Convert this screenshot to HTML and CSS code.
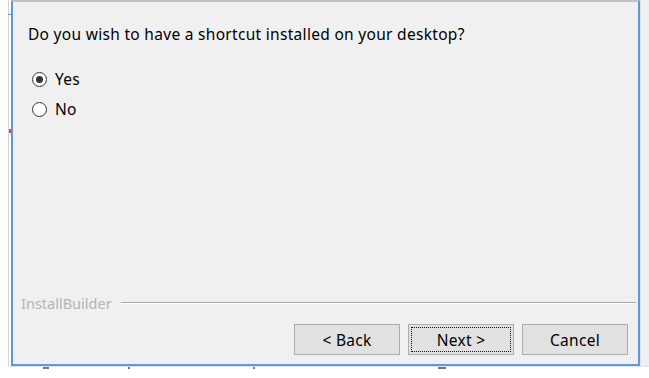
FILE: index.html
```html
<!DOCTYPE html>
<html>
<head>
<meta charset="utf-8">
<link rel="stylesheet" href="styles.css">
</head>
<body>
<div class="screen">
  <div class="backdrop-left"><span class="notch-blue"></span><span class="notch-red"></span></div>
  <div class="window">
    <div class="content">
      <p class="question">Do you wish to have a shortcut installed on your desktop?</p>
      <div class="options">
        <label class="radio"><span class="dot checked"></span><span>Yes</span></label>
        <label class="radio"><span class="dot"></span><span>No</span></label>
      </div>
    </div>
    <div class="brand">
      <span class="brand-name">InstallBuilder</span>
      <span class="brand-line"></span>
    </div>
    <div class="buttons">
      <button class="btn">&lt; Back</button>
      <button class="btn default"><span class="focus">Next &gt;</span></button>
      <button class="btn">Cancel</button>
    </div>
  </div>
  <div class="backdrop-right"></div>
</div>
<div class="below">
  <span class="frag f1"></span>
  <span class="frag f2"></span>
  <span class="frag f3"></span>
  <span class="frag f4"></span>
</div>
</body>
</html>
```
FILE: styles.css
```css
html, body {
  margin: 0;
  padding: 0;
  background: #ffffff;
  font-family: "Noto Sans", "Open Sans", sans-serif;
  overflow: hidden;
}

.screen {
  display: flex;
  height: 366px;
}

.backdrop-left {
  width: 8px;
  border-right: 1px solid #d4d4d4;
  margin-right: 2px;
  position: relative;
}

.notch-blue {
  position: absolute;
  left: 8px;
  top: 14px;
  width: 3px;
  height: 1px;
  background: #5d9ad6;
}

.notch-red {
  position: absolute;
  left: 9px;
  top: 129px;
  width: 2px;
  height: 4px;
  background: #d44;
}

.window {
  width: 625px;
  height: 362px;
  background: #f0f0f0;
  border-top: 2px solid #c3c3c3;
  border-left: 2px solid #5b9bd8;
  border-right: 2px solid #5b9bd8;
  border-bottom: 2px solid #5b9bd8;
  display: flex;
  flex-direction: column;
}

.backdrop-right {
  flex: 1;
  background: #efefef;
  border-left: 1px solid #e0e0e0;
}

.content {
  flex: 1;
  padding: 22px 0 0 15px;
}

.question {
  margin: 0;
  font-size: 15.5px;
  letter-spacing: 0.3px;
  line-height: 20px;
  color: #000;
}

.options {
  margin-top: 25px;
  display: flex;
  flex-direction: column;
  gap: 10px;
}

.radio {
  display: flex;
  align-items: center;
  gap: 8px;
  height: 20px;
  font-size: 15.5px;
  letter-spacing: 0.3px;
  color: #000;
  padding-left: 4px;
}

.dot {
  width: 13px;
  height: 13px;
  border: 1px solid #333;
  border-radius: 50%;
  background: #fff;
  display: flex;
  align-items: center;
  justify-content: center;
}

.dot.checked::after {
  content: "";
  width: 7px;
  height: 7px;
  border-radius: 50%;
  background: #333;
}

.brand {
  display: flex;
  align-items: center;
  padding: 0 2px 0 8px;
  gap: 9px;
}

.brand-name {
  font-size: 14.5px;
  line-height: 18px;
  color: #b4b4b4;
}

.brand-line {
  flex: 1;
  height: 0;
  border-top: 1px solid #a8a8a8;
  border-bottom: 1px solid #ffffff;
}

.buttons {
  display: flex;
  justify-content: flex-end;
  gap: 8px;
  padding: 0 10px 9px 0;
  margin-top: 12px;
}

.btn {
  width: 106px;
  height: 31px;
  background: #e1e1e1;
  border: 1px solid #adadad;
  font-family: "Noto Sans", "Open Sans", sans-serif;
  font-size: 15.5px;
  letter-spacing: 0.3px;
  color: #000;
  padding: 0;
  display: flex;
  align-items: center;
  justify-content: center;
}

.btn.default {
  padding: 2px;
}

.focus {
  flex: 1;
  align-self: stretch;
  border: 1px dotted #111;
  display: flex;
  align-items: center;
  justify-content: center;
}

.below {
  position: relative;
  height: 12px;
  border-top: 1px solid #e4e4e4;
  margin-left: 8px;
}

.frag {
  position: absolute;
  top: 0;
  height: 2px;
  background: #777;
}

.f1 { left: 35px; width: 6px; }
.f2 { left: 120px; width: 2px; }
.f3 { left: 245px; width: 2px; }
.f4 { left: 430px; width: 8px; }
```
